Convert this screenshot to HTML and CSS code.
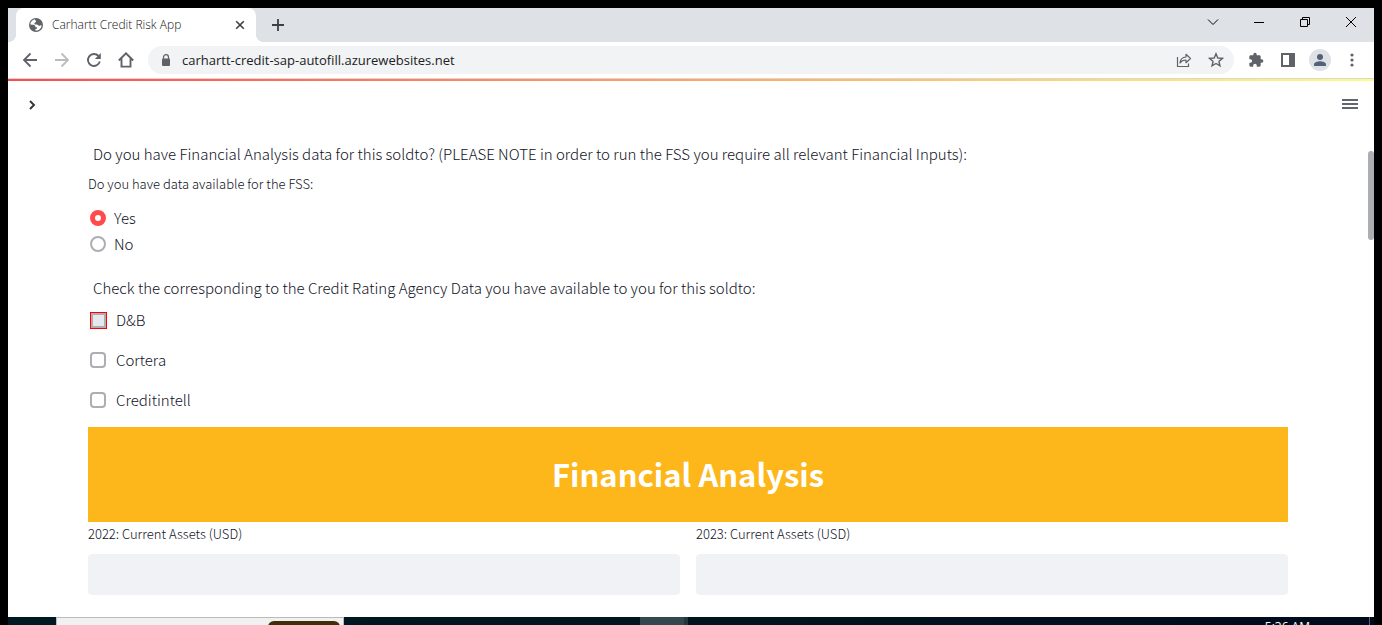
FILE: index.html
```html
<!DOCTYPE html>
<html lang="en">
<head>
<meta charset="utf-8">
<title>Carhartt Credit Risk App</title>
<link rel="stylesheet" href="styles.css">
</head>
<body>
<div class="browser">
  <header class="tab-strip">
    <div class="tab">
      <svg class="favicon" width="14" height="14" viewBox="0 0 14 14"><circle cx="7" cy="7" r="7" fill="#5f6368"/><path d="M6 1.200C3 1.600 1.300 4.100 1.300 6.600l2.400.1c1.600 0 2.600.5 2.600 1.800 0 .8.7.9 1.700.9.2 1.200-.6 1.500-1.600 1.500v1.700c3.500.3 6-2.200 6.200-5.100-.8-.6-1.200.3-2.300.3-1.300 0-1.300-.9-2.400-1.200-1-.3-2.500.1-2.500-1.200 0-1 1.700-.7 1.700-1.800 0-.8-.8-1-.7-1.400z" fill="#fff"/></svg>
      <span class="tab-title">Carhartt Credit Risk App</span>
      <button class="tab-close" aria-label="Close tab"><svg width="10" height="10" viewBox="0 0 10 10"><path d="M1.200 1.200l7.600 7.600M8.800 1.200L1.200 8.800" stroke="#3c4043" stroke-width="1.600"/></svg></button>
    </div>
    <button class="new-tab" aria-label="New tab"><svg width="12" height="12" viewBox="0 0 12 12"><path d="M6 0v12M0 6h12" stroke="#3c4043" stroke-width="1.800"/></svg></button>
    <div class="window-controls">
      <button aria-label="Search tabs"><svg width="12" height="12" viewBox="0 0 12 12"><path d="M1 3.500l5 5 5-5" fill="none" stroke="#000"/></svg></button>
      <button aria-label="Minimize"><svg width="10" height="10" viewBox="0 0 10 10"><path d="M0 5.500h10" stroke="#000"/></svg></button>
      <button aria-label="Restore"><svg width="10" height="10" viewBox="0 0 10 10"><path d="M.5 2.500h7v7h-7zM2.500 2.500v-2h7v7h-2" fill="none" stroke="#000"/></svg></button>
      <button aria-label="Close"><svg width="10" height="10" viewBox="0 0 10 10"><path d="M0 0l10 10M10 0L0 10" stroke="#000"/></svg></button>
    </div>
  </header>

  <nav class="toolbar" aria-label="Browser toolbar">
    <button class="tool" aria-label="Back"><svg width="16" height="16" viewBox="0 0 16 16"><path d="M15 8H2M8.500 1.500L2 8l6.500 6.500" fill="none" stroke="#5f6368" stroke-width="1.800"/></svg></button>
    <button class="tool" aria-label="Forward"><svg width="16" height="16" viewBox="0 0 16 16"><path d="M1 8h13M7.500 1.500L14 8l-6.500 6.500" fill="none" stroke="#babcbe" stroke-width="1.800"/></svg></button>
    <button class="tool" aria-label="Reload"><svg width="16" height="16" viewBox="0 0 16 16"><path d="M13.800 9.500A6 6 0 1 1 12.500 4" fill="none" stroke="#5f6368" stroke-width="1.900"/><path d="M14.800 1v6H8.800z" fill="#5f6368"/></svg></button>
    <button class="tool" aria-label="Home"><svg width="16" height="16" viewBox="0 0 16 16"><path d="M.8 8.500L8 1.300l7.200 7.200M3.500 6.500v8.100h9V6.500" fill="none" stroke="#5f6368" stroke-width="1.900"/></svg></button>
    <div class="omnibox">
      <svg width="10" height="12" viewBox="0 0 10 12"><path d="M2.500 5V3.200a2.500 2.500 0 0 1 5 0V5" fill="none" stroke="#5f6368" stroke-width="1.200"/><rect x="1" y="4.500" width="8" height="7.500" rx="1" fill="#5f6368"/></svg>
      <input class="url" type="text" aria-label="Address" value="carhartt-credit-sap-autofill.azurewebsites.net">
      <button class="tool" aria-label="Share"><svg width="16" height="16" viewBox="0 0 16 16"><path d="M1.500 5v9.500h11v-3" fill="none" stroke="#5f6368" stroke-width="1.200"/><path d="M4 11c.3-3.700 2.300-5.700 6-6V2.300L14.500 6.500 10 10.700V8c-2.800 0-4.600.9-6 3z" fill="none" stroke="#5f6368" stroke-width="1.200" stroke-linejoin="round"/></svg></button>
      <button class="tool" aria-label="Bookmark"><svg width="16" height="16" viewBox="0 0 16 16"><path d="M8 1.800l1.800 4.200 4.600.4-3.500 3 1.100 4.500L8 11.500l-4 2.400 1.100-4.500-3.500-3 4.600-.4z" fill="none" stroke="#5f6368" stroke-width="1.400"/></svg></button>
    </div>
    <button class="tool" aria-label="Extensions"><svg width="16" height="16" viewBox="0 0 24 24"><path d="M20.500 11H19V7c0-1.100-.9-2-2-2h-4V3.500a2.500 2.500 0 0 0-5 0V5H4c-1.100 0-2 .9-2 2v3.800h1.500a2.700 2.700 0 0 1 0 5.400H2V20c0 1.100.9 2 2 2h3.800v-1.500a2.700 2.700 0 0 1 5.400 0V22H17c1.100 0 2-.9 2-2v-4h1.500a2.500 2.500 0 0 0 0-5z" fill="#5f6368"/></svg></button>
    <button class="tool" aria-label="Side panel"><svg width="14" height="14" viewBox="0 0 14 14"><path d="M0 0h14v14H0zM2 2v10h6V2z" fill="#5f6368" fill-rule="evenodd"/></svg></button>
    <button class="tool" aria-label="Profile"><svg width="22" height="22" viewBox="0 0 22 22"><circle cx="11" cy="11" r="11" fill="#dee1e6"/><circle cx="11" cy="8" r="3" fill="#566178"/><path d="M5 17v-1.800c0-2 3.800-3 6-3s6 1 6 3V17z" fill="#566178"/></svg></button>
    <button class="tool" aria-label="Menu"><svg width="4" height="14" viewBox="0 0 4 14"><g fill="#5f6368"><circle cx="2" cy="2" r="1.600"/><circle cx="2" cy="7" r="1.600"/><circle cx="2" cy="12" r="1.600"/></g></svg></button>
  </nav>

  <div class="viewport">
    <div class="decoration"></div>
    <div class="app-header">
      <button aria-label="Open sidebar"><svg width="8" height="12" viewBox="0 -2 8 12"><path d="M2 1l4 4-4 4" fill="none" stroke="#31333f" stroke-width="1.900"/></svg></button>
      <button aria-label="App menu"><svg width="16" height="10" viewBox="0 0 16 10"><path d="M0 1h16M0 5h16M0 9h16" stroke="#31333f" stroke-width="1.600"/></svg></button>
    </div>
    <main class="content">
      <p class="prompt">Do you have Financial Analysis data for this soldto? (PLEASE NOTE in order to run the FSS you require all relevant Financial Inputs):</p>
      <fieldset class="radios">
        <legend>Do you have data available for the FSS:</legend>
        <label><input type="radio" name="fss" checked>Yes</label>
        <label><input type="radio" name="fss">No</label>
      </fieldset>
      <p class="prompt">Check the corresponding to the Credit Rating Agency Data you have available to you for this soldto:</p>
      <div class="checks">
        <label><input class="marked" type="checkbox">D&amp;B</label>
        <label><input type="checkbox">Cortera</label>
        <label><input type="checkbox">Creditintell</label>
      </div>
      <h1 class="banner">Financial Analysis</h1>
      <div class="fields">
        <label>2022: Current Assets (USD)<input type="text"></label>
        <label>2023: Current Assets (USD)<input type="text"></label>
      </div>
    </main>
    <div class="scroll-thumb"></div>
  </div>
</div>
<footer class="taskbar">
  <div class="search-box"><div class="search-art"></div></div>
  <div class="running-app"></div>
  <time class="clock">5:36 AM</time>
  <div class="show-desktop"></div>
</footer>
</body>
</html>
```
FILE: styles.css
```css
* { box-sizing: border-box; }

body {
  margin: 0;
  padding: 8px 8px 0;
  height: 100vh;
  display: flex;
  flex-direction: column;
  overflow: hidden;
  background: #000;
  color: #10121e;
  font-family: "Noto Sans CJK SC", "Noto Sans", sans-serif;
}

button {
  display: flex;
  align-items: center;
  justify-content: center;
  padding: 0;
  border: 0;
  background: none;
}

.browser {
  flex: 1;
  min-height: 0;
  display: flex;
  flex-direction: column;
  background: #fff;
}

.tab-strip {
  flex: none;
  display: flex;
  height: 34px;
  padding-left: 8px;
  background: #dee1e6;
}

.tab {
  position: relative;
  display: flex;
  align-items: center;
  width: 240px;
  padding: 0 8px 0 13px;
  border-radius: 8px 8px 0 0;
  background: #fff;
}

.tab::before,
.tab::after {
  content: "";
  position: absolute;
  bottom: 0;
  width: 8px;
  height: 8px;
}

.tab::before {
  right: 100%;
  background: radial-gradient(circle at 0 0, #dee1e6 8px, #fff 8px);
}

.tab::after {
  left: 100%;
  background: radial-gradient(circle at 100% 0, #dee1e6 8px, #fff 8px);
}

.tab-title {
  flex: 1;
  margin-left: 9px;
  color: #111416;
  font: 300 12px/16px "Open Sans", sans-serif;
}

.tab-close { width: 16px; height: 16px; }

.new-tab { width: 44px; }

.window-controls {
  display: flex;
  height: 28px;
  margin-left: auto;
}

.window-controls button { width: 46px; }

.toolbar {
  flex: none;
  display: flex;
  align-items: center;
  height: 37px;
  padding: 0 6px;
  border-bottom: 1px solid #d5d7da;
}

.tool {
  flex: none;
  width: 32px;
  height: 28px;
}

.omnibox {
  flex: 1;
  display: flex;
  align-items: center;
  height: 28px;
  margin: 0 6px;
  padding: 0 2px 0 13px;
  border-radius: 14px;
  background: #f1f3f4;
}

.url {
  flex: 1;
  margin-left: 11px;
  padding: 0;
  border: 0;
  outline: 0;
  background: none;
  color: #202124;
  font: 13px/20px "Open Sans", sans-serif;
}

.viewport {
  position: relative;
  flex: 1;
  min-height: 0;
  overflow: hidden;
}

.decoration {
  height: 2px;
  background: linear-gradient(90deg, #ff4b4b, #fffd80);
}

.app-header {
  display: flex;
  align-items: center;
  justify-content: space-between;
  height: 46px;
  padding: 0 16px 0 20px;
}

.content {
  padding: 15px 86px 0 80px;
  font-size: 15px;
  font-weight: 300;
  line-height: 24px;
}

.prompt { margin: 0 0 0 5px; }

.radios {
  margin: 8px 0 19px;
  padding: 0;
  border: 0;
}

.radios legend {
  margin-bottom: 11px;
  padding: 0;
  font-size: 13px;
  line-height: 20px;
}

.radios label,
.checks label {
  display: flex;
  align-items: center;
  padding-left: 2px;
}

.radios label { height: 26px; gap: 8px; }

.checks {
  display: grid;
  gap: 16px;
  margin: 8px 0 15px;
}

.checks label { gap: 10px; }

.radios input,
.checks input {
  appearance: none;
  width: 16px;
  height: 16px;
  margin: 0;
  border: 2px solid #adaeb4;
  background: #fff;
}

.radios input { border-radius: 50%; }
.radios input:checked { border: 5px solid #ff4b4b; }
.checks input { border-radius: 4px; }

.checks .marked {
  width: 17px;
  height: 17px;
  margin-right: -1px;
  border: 1px solid #f00;
  border-radius: 0;
  background: #e6e8ec;
  box-shadow: inset 0 0 0 2px #adaeb4;
}

.banner {
  margin: 0;
  padding: 23px 0 24px;
  background: #fdb71a;
  color: #fff;
  font-size: 31px;
  font-weight: 700;
  line-height: 48px;
  text-align: center;
}

.fields {
  display: grid;
  grid-template-columns: 1fr 1fr;
  gap: 16px;
  padding-top: 2px;
}

.fields label {
  display: grid;
  gap: 10px;
  font-size: 13px;
  line-height: 20px;
}

.fields input {
  width: 100%;
  height: 41px;
  padding: 8px;
  border: 0;
  border-radius: 4px;
  background: #f0f2f6;
  font: inherit;
}

.scroll-thumb {
  position: absolute;
  top: 72px;
  right: 0;
  width: 6px;
  height: 89px;
  border-radius: 3px;
  background: #adaeb4;
}

.taskbar {
  flex: none;
  display: flex;
  height: 8px;
  padding-left: 48px;
  overflow: hidden;
  background: linear-gradient(90deg, #001821, #00141f 50%, #000a1c);
}

.search-box {
  width: 288px;
  padding: 3px 3px 0;
  border: 1px solid #bbb;
  border-bottom: 0;
  background: #f1f1f1;
}

.search-art {
  width: 72px;
  height: 8px;
  margin-left: auto;
  border-radius: 6px 6px 0 0;
  background: #412d0a;
}

.running-app {
  width: 48px;
  margin-left: 296px;
  border-right: 4px solid #26363d;
  background: #33474f;
}

.clock {
  margin-left: auto;
  padding-top: 2px;
  color: #fff;
  font: 12px/16px "Open Sans", sans-serif;
}

.show-desktop {
  width: 5px;
  margin-left: 59px;
  border-left: 1px solid #57606c;
}
```
